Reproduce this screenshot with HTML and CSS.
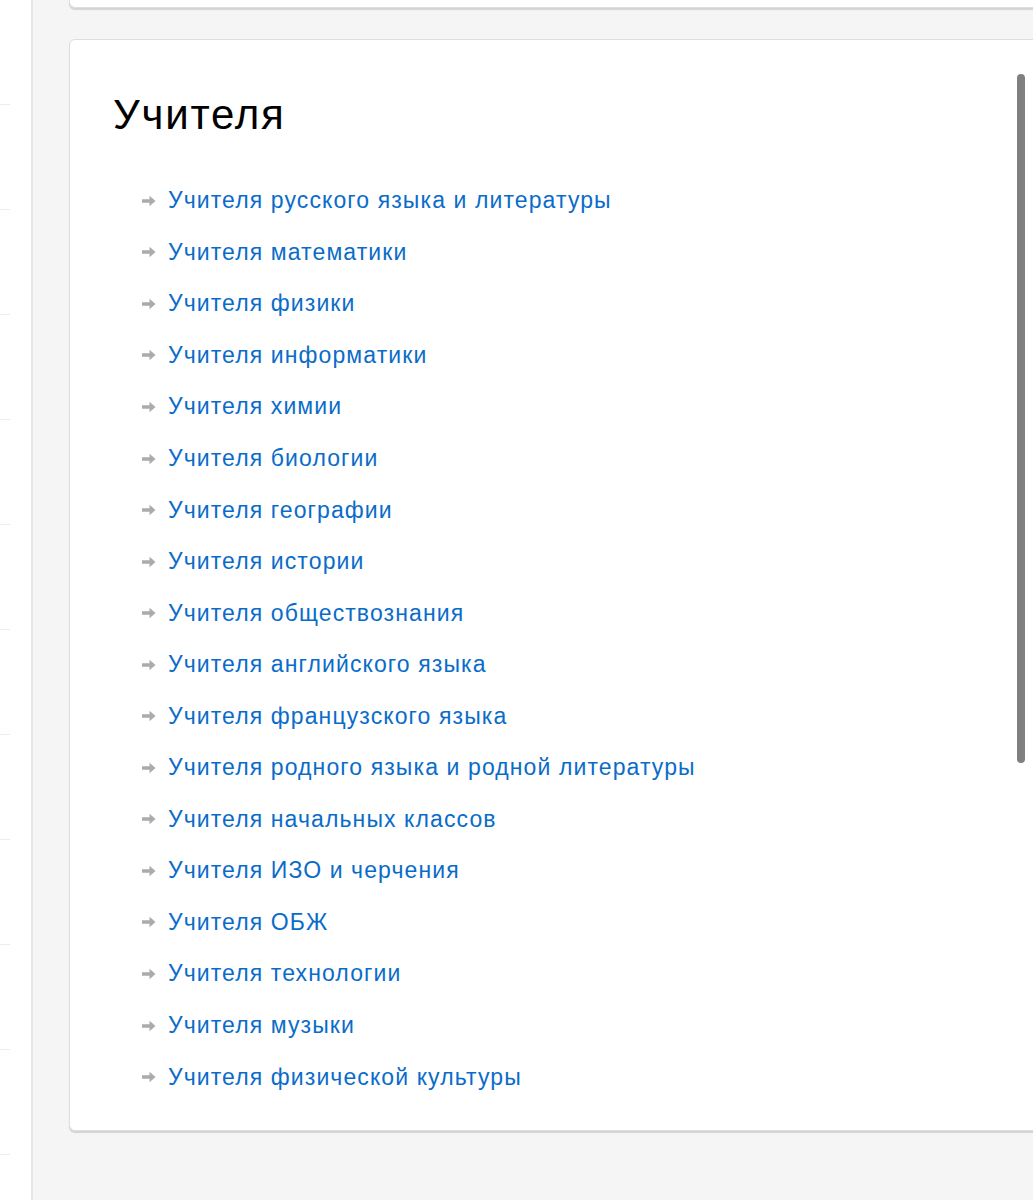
FILE: index.html
```html
<!DOCTYPE html>
<html lang="ru">
<head>
<meta charset="utf-8">
<link rel="stylesheet" href="styles.css">
</head>
<body>
<div class="page">
  <aside class="sidebar">
    <div class="tick"></div><div class="tick"></div><div class="tick"></div><div class="tick"></div>
    <div class="tick"></div><div class="tick"></div><div class="tick"></div><div class="tick"></div>
    <div class="tick"></div><div class="tick"></div><div class="tick"></div>
  </aside>
  <main class="main">
    <div class="card card-prev"></div>
    <section class="card">
      <h1 class="title">Учителя</h1>
      <ul class="links">
        <li><svg class="arrow" viewBox="0 0 14 12"><path d="M0 4.3h7.5V0.8l6 5.2-6 5.2V7.7H0z"/></svg><a href="#">Учителя русского языка и литературы</a></li>
        <li><svg class="arrow" viewBox="0 0 14 12"><path d="M0 4.3h7.5V0.8l6 5.2-6 5.2V7.7H0z"/></svg><a href="#">Учителя математики</a></li>
        <li><svg class="arrow" viewBox="0 0 14 12"><path d="M0 4.3h7.5V0.8l6 5.2-6 5.2V7.7H0z"/></svg><a href="#">Учителя физики</a></li>
        <li><svg class="arrow" viewBox="0 0 14 12"><path d="M0 4.3h7.5V0.8l6 5.2-6 5.2V7.7H0z"/></svg><a href="#">Учителя информатики</a></li>
        <li><svg class="arrow" viewBox="0 0 14 12"><path d="M0 4.3h7.5V0.8l6 5.2-6 5.2V7.7H0z"/></svg><a href="#">Учителя химии</a></li>
        <li><svg class="arrow" viewBox="0 0 14 12"><path d="M0 4.3h7.5V0.8l6 5.2-6 5.2V7.7H0z"/></svg><a href="#">Учителя биологии</a></li>
        <li><svg class="arrow" viewBox="0 0 14 12"><path d="M0 4.3h7.5V0.8l6 5.2-6 5.2V7.7H0z"/></svg><a href="#">Учителя географии</a></li>
        <li><svg class="arrow" viewBox="0 0 14 12"><path d="M0 4.3h7.5V0.8l6 5.2-6 5.2V7.7H0z"/></svg><a href="#">Учителя истории</a></li>
        <li><svg class="arrow" viewBox="0 0 14 12"><path d="M0 4.3h7.5V0.8l6 5.2-6 5.2V7.7H0z"/></svg><a href="#">Учителя обществознания</a></li>
        <li><svg class="arrow" viewBox="0 0 14 12"><path d="M0 4.3h7.5V0.8l6 5.2-6 5.2V7.7H0z"/></svg><a href="#">Учителя английского языка</a></li>
        <li><svg class="arrow" viewBox="0 0 14 12"><path d="M0 4.3h7.5V0.8l6 5.2-6 5.2V7.7H0z"/></svg><a href="#">Учителя французского языка</a></li>
        <li><svg class="arrow" viewBox="0 0 14 12"><path d="M0 4.3h7.5V0.8l6 5.2-6 5.2V7.7H0z"/></svg><a href="#">Учителя родного языка и родной литературы</a></li>
        <li><svg class="arrow" viewBox="0 0 14 12"><path d="M0 4.3h7.5V0.8l6 5.2-6 5.2V7.7H0z"/></svg><a href="#">Учителя начальных классов</a></li>
        <li><svg class="arrow" viewBox="0 0 14 12"><path d="M0 4.3h7.5V0.8l6 5.2-6 5.2V7.7H0z"/></svg><a href="#">Учителя ИЗО и черчения</a></li>
        <li><svg class="arrow" viewBox="0 0 14 12"><path d="M0 4.3h7.5V0.8l6 5.2-6 5.2V7.7H0z"/></svg><a href="#">Учителя ОБЖ</a></li>
        <li><svg class="arrow" viewBox="0 0 14 12"><path d="M0 4.3h7.5V0.8l6 5.2-6 5.2V7.7H0z"/></svg><a href="#">Учителя технологии</a></li>
        <li><svg class="arrow" viewBox="0 0 14 12"><path d="M0 4.3h7.5V0.8l6 5.2-6 5.2V7.7H0z"/></svg><a href="#">Учителя музыки</a></li>
        <li><svg class="arrow" viewBox="0 0 14 12"><path d="M0 4.3h7.5V0.8l6 5.2-6 5.2V7.7H0z"/></svg><a href="#">Учителя физической культуры</a></li>
      </ul>
      <div class="scrollbar"></div>
    </section>
  </main>
</div>
</body>
</html>
```
FILE: styles.css
```css
html, body {
  margin: 0;
  padding: 0;
  height: 100%;
}
body {
  font-family: "Liberation Sans", Arial, sans-serif;
  background: #f5f5f5;
}
.page {
  display: flex;
  height: 1200px;
  overflow: hidden;
}
.sidebar {
  width: 31px;
  flex: none;
  background: #fff;
  border-right: 2px solid #e6e6e6;
  padding-top: 104px;
  box-sizing: content-box;
}
.tick {
  width: 10px;
  height: 1px;
  background: #ececec;
  margin-bottom: 104px;
}
.main {
  flex: 1;
  background: #f5f5f5;
  padding-left: 36px;
  overflow: hidden;
}
.card {
  position: relative;
  background: #fff;
  border: 1px solid #dedede;
  border-radius: 6px;
  box-shadow: 0 2px 1px #d4d4d4;
  width: calc(100% + 40px);
  box-sizing: border-box;
}
.card-prev {
  height: 8px;
  border-top: none;
  border-radius: 0 0 6px 6px;
  margin-bottom: 31px;
}
.title {
  margin: 0;
  padding: 52px 0 0 43px;
  font-size: 42px;
  letter-spacing: 1.8px;
  font-weight: normal;
  line-height: 46px;
  color: #000;
}
.links {
  list-style: none;
  margin: 0;
  padding: 37px 0 27px 72px;
}
.links li {
  display: flex;
  align-items: center;
  height: 51.55px;
  font-size: 23px;
  letter-spacing: 1.1px;
}
.arrow {
  width: 14px;
  height: 12px;
  fill: #ababab;
  margin-right: 12px;
  flex: none;
}
.links a {
  color: #0a6cc9;
  text-decoration: none;
}
.scrollbar {
  position: absolute;
  top: 34px;
  left: 947px;
  width: 8px;
  height: 689px;
  border-radius: 4px;
  background: #808080;
}
```
